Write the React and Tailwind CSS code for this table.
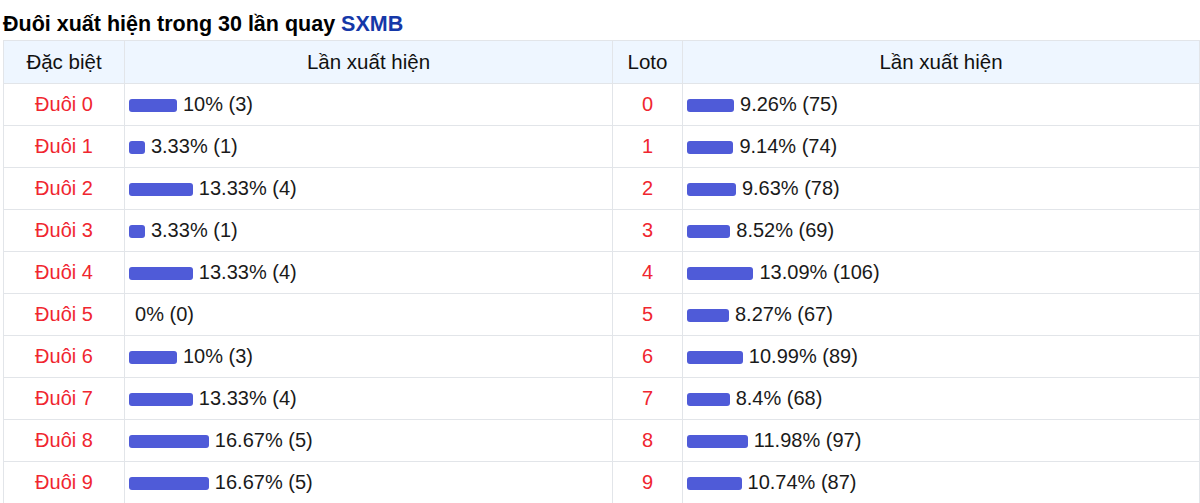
const special = [
  { label: 'Đuôi 0', pct: 10, count: 3 },
  { label: 'Đuôi 1', pct: 3.33, count: 1 },
  { label: 'Đuôi 2', pct: 13.33, count: 4 },
  { label: 'Đuôi 3', pct: 3.33, count: 1 },
  { label: 'Đuôi 4', pct: 13.33, count: 4 },
  { label: 'Đuôi 5', pct: 0, count: 0 },
  { label: 'Đuôi 6', pct: 10, count: 3 },
  { label: 'Đuôi 7', pct: 13.33, count: 4 },
  { label: 'Đuôi 8', pct: 16.67, count: 5 },
  { label: 'Đuôi 9', pct: 16.67, count: 5 },
]

const loto = [
  { pct: 9.26, count: 75 },
  { pct: 9.14, count: 74 },
  { pct: 9.63, count: 78 },
  { pct: 8.52, count: 69 },
  { pct: 13.09, count: 106 },
  { pct: 8.27, count: 67 },
  { pct: 10.99, count: 89 },
  { pct: 8.4, count: 68 },
  { pct: 11.98, count: 97 },
  { pct: 10.74, count: 87 },
]

function Bar({ pct, count }) {
  return (
    <>
      <span
        className="inline-block h-[13px] rounded-[3px] bg-[#4f5bd8] align-[-1px] mr-[6px]"
        style={{ width: `${pct}%` }}
      />
      {pct}% ({count})
    </>
  )
}

export default function App() {
  return (
    <div className="px-[3px] bg-white font-['Liberation_Sans',Arial,sans-serif] text-[#1a1a1a]">
      <h2 className="pt-[12px] mb-[3px] text-[21.5px] leading-[25px] font-bold text-black">
        Đuôi xuất hiện trong 30 lần quay <span className="text-[#1538a8]">SXMB</span>
      </h2>
      <table className="table-fixed border-collapse w-[1196px] text-[20px]">
        <thead>
          <tr className="bg-[#eef6ff]">
            <th className="w-[121px] h-[43px] border border-[#e2e5e9] font-normal text-[20.5px] text-[#111]">Đặc biệt</th>
            <th className="w-[488px] border border-[#e2e5e9] font-normal text-[20.5px] text-[#111]">Lần xuất hiện</th>
            <th className="w-[70px] border border-[#e2e5e9] font-normal text-[20.5px] text-[#111]">Loto</th>
            <th className="w-[517px] border border-[#e2e5e9] font-normal text-[20.5px] text-[#111]">Lần xuất hiện</th>
          </tr>
        </thead>
        <tbody>
          {special.map((s, i) => (
            <tr key={s.label}>
              <td className="h-[42px] pb-[1px] border border-[#e2e5e9] text-center text-[#f0262f]">{s.label}</td>
              <td className="pb-[1px] border border-[#e2e5e9] px-[4px] whitespace-nowrap">
                <Bar pct={s.pct} count={s.count} />
              </td>
              <td className="pb-[1px] border border-[#e2e5e9] text-center text-[#f0262f]">{i}</td>
              <td className="pb-[1px] border border-[#e2e5e9] px-[4px] whitespace-nowrap">
                <Bar pct={loto[i].pct} count={loto[i].count} />
              </td>
            </tr>
          ))}
        </tbody>
      </table>
    </div>
  )
}
